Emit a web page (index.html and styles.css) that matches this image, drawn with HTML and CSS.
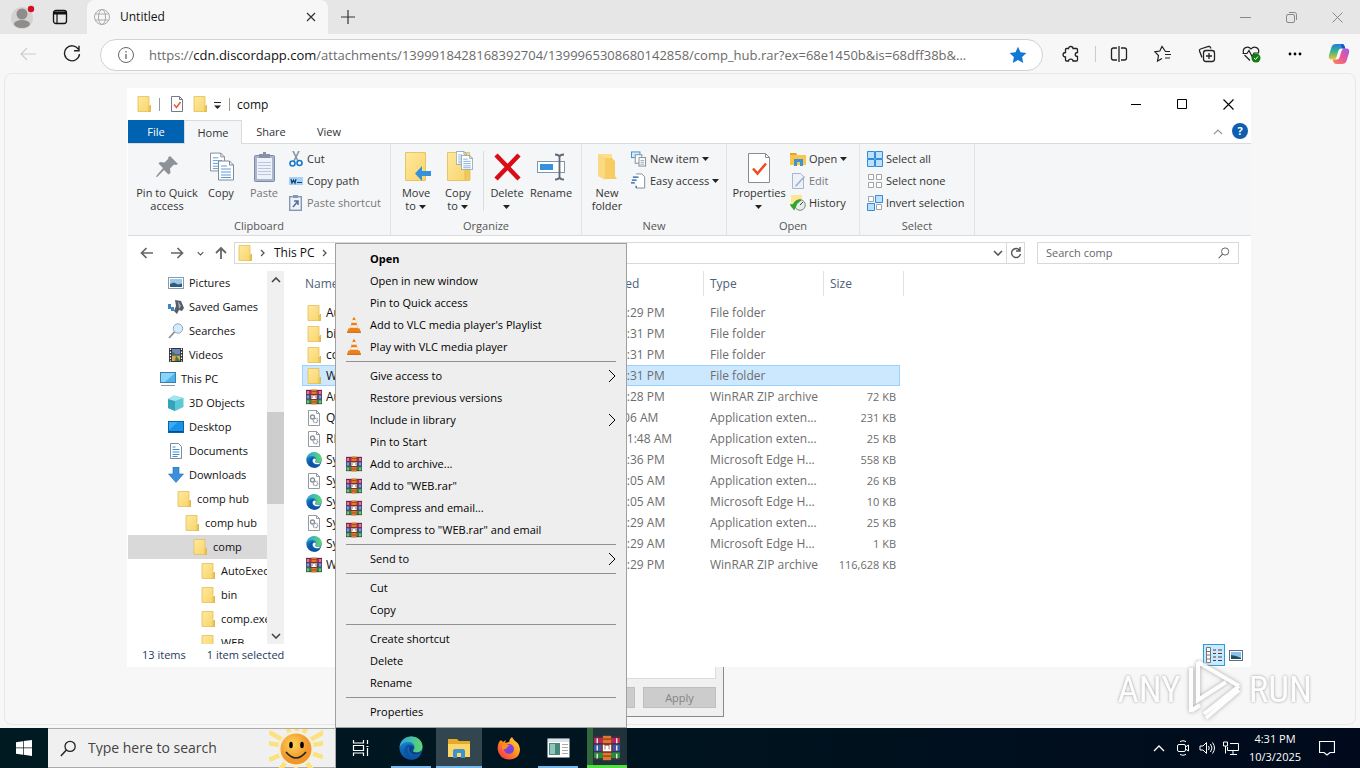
FILE: index.html
```html
<!DOCTYPE html>
<html lang="en">
<head>
<meta charset="utf-8">
<title>Untitled</title>
<link rel="stylesheet" href="styles.css">
</head>
<body>
<svg class="defs" aria-hidden="true">
  <defs>
    <linearGradient id="gFolder" x1="0" y1="0" x2="1" y2="1"><stop offset="0" stop-color="#ffe9a0"/><stop offset="1" stop-color="#f8d467"/></linearGradient>
    <linearGradient id="gEdge" x1="0" y1="0" x2="1" y2="0"><stop offset="0" stop-color="#2aa5dc"/><stop offset="1" stop-color="#5fd86a"/></linearGradient>
    <linearGradient id="gEdge2" x1="0" y1="0" x2="0" y2="1"><stop offset="0" stop-color="#1b8fd8"/><stop offset="1" stop-color="#0c4d9d"/></linearGradient>
    <linearGradient id="gCop1" x1="0" y1="0" x2="0" y2="1"><stop offset="0" stop-color="#1c7fe0"/><stop offset=".5" stop-color="#3fb58a"/><stop offset="1" stop-color="#f2c52b"/></linearGradient>
    <linearGradient id="gCop2" x1="1" y1="0" x2="0" y2="1"><stop offset="0" stop-color="#a35be8"/><stop offset=".5" stop-color="#e8569c"/><stop offset="1" stop-color="#fb8a4a"/></linearGradient>
    <linearGradient id="gFire" x1="1" y1="0" x2="0" y2="1"><stop offset="0" stop-color="#ffe23c"/><stop offset=".5" stop-color="#ff8a1e"/><stop offset="1" stop-color="#f0245c"/></linearGradient>
    <radialGradient id="gSun" cx=".4" cy=".35"><stop offset="0" stop-color="#ffd35a"/><stop offset="1" stop-color="#f0962a"/></radialGradient>
  </defs>
  <symbol id="folder" viewBox="0 0 16 16"><path d="M2 .5h11v11l1.500-2v6H2z" fill="url(#gFolder)" stroke="#e3bf55" stroke-width=".8"/><path d="M13 15.500V11.500l1.500-2.500v6.500z" fill="#f3cf5d" stroke="#d9b148" stroke-width=".7"/></symbol>
  <symbol id="rar" viewBox="0 0 16 16"><path d="M0 1h16v4.500H0z" fill="#b32a55"/><path d="M0 5.500h16v5H0z" fill="#3a56a8"/><path d="M0 10.500h16V15H0z" fill="#2a8b3c"/><path d="M0 1.300h16M0 5.500h16M0 10.300h16M0 14.700h16" stroke="#3a2540" stroke-width=".7"/><path d="M2 2v3M2 6.500v3M2 11.500v3M14 2v3M14 6.500v3M14 11.500v3" stroke="#f0e6da" stroke-width=".9"/><path d="M5.500.5h5v15h-5z" fill="#e0782e"/><path d="M5.500 2.500h5M5.500 13h5" stroke="#8d3f1c" stroke-width=".7"/><path d="M4.500 5h7v6h-7z" fill="#7b3326"/><path d="M6 6v3.500h1.500V7h1v2.500H10V6" fill="none" stroke="#fff" stroke-width="1.100"/></symbol>
  <symbol id="edge" viewBox="0 0 24 24"><circle cx="12" cy="12" r="11.500" fill="url(#gEdge2)"/><path d="M.6 11C1.500 4.500 6.500.5 12.500.5 19 .5 23.500 5 23.500 10.500c0 4-3 6-6 6-2.500 0-4-1-3.500-2 1-1 1.500-2 1.500-3.500C15.500 8 12.500 6 9 6S2.500 8 .6 11z" fill="url(#gEdge)"/><path d="M9 11.500c-1.500 5 2.500 9.500 7 9.500 2.500 0 4.500-1 6-2.500-2 3.500-6 5.300-9.500 5-4.500-.5-7.500-4-7.500-8 0-3 1.500-5.500 4-7 2.500-.5 5 .5 5.500 3 .2 1-.2 2-1 3-.5-2-2.500-4-4.500-3z" fill="#0b55a8"/><path d="M10 12c.5-2 2.500-3 4.300-1.800.9 1 .4 2.600-.3 3.800-.8 1.500 1.500 2.500 3.500 2.500 1.500 0 3.500-.5 5-2-.5 2-2.500 4-6 4-4 0-7-3-6.500-6.500z" fill="#0d3f7a" opacity=".9"/></symbol>
  <symbol id="edge-light" viewBox="0 0 24 24"><use href="#edge"/><path d="M10 12c.5-2 2.500-3 4.300-1.800.9 1 .4 2.600-.3 3.800-.8 1.500 1.500 2.500 3.500 2.500 1.500 0 3.500-.5 5-2-.5 2-2.500 4-6 4-4 0-7-3-6.500-6.500z" fill="#f2fafd"/></symbol>
  <symbol id="dll" viewBox="0 0 16 16"><path d="M2.500.5h8l3 3v12h-11z" fill="#fff" stroke="#8a8f96" stroke-width=".9"/><path d="M10.500.5v3h3" fill="none" stroke="#8a8f96" stroke-width=".9"/><circle cx="6.500" cy="7" r="2" fill="none" stroke="#85919c" stroke-width="1.300"/><circle cx="9.500" cy="10.500" r="2.200" fill="none" stroke="#85919c" stroke-width="1.300" stroke-dasharray="1 .5"/></symbol>
  <symbol id="vlc" viewBox="0 0 16 16"><path d="M1 15.500l1.300-4h11.400l1.300 4z" fill="#ee8418"/><path d="M7.200.5h1.600l3.700 12c-1.500 1.600-7.500 1.600-9 0z" fill="#ef7f14"/><path d="M6.500 3h3l.9 2.700H5.600zM4.800 8.200h6.400l.8 2.500H4z" fill="#f4f4f4"/><path d="M1 15.300h14" stroke="#b9600c" stroke-width=".9"/></symbol>
  <symbol id="props" viewBox="0 0 24 32"><path d="M1.500 2.500h17l4 4v25h-21z" fill="#fff" stroke="#8b8b8b"/><path d="M18.500 2.500v4h4" fill="none" stroke="#8b8b8b"/><path d="M6 17.500l4.500 5L19 12.500" fill="none" stroke="#e8501e" stroke-width="2.600"/></symbol>
  <symbol id="props-small" viewBox="0 0 14 16"><path d="M1.500.5h8l3 3v12h-11z" fill="#fff" stroke="#75798a"/><path d="M9.500.5v3h3" fill="none" stroke="#75798a"/><path d="M4 8.500l2.500 3 4-5.500" fill="none" stroke="#e0623a" stroke-width="1.600"/></symbol>
  <symbol id="page" viewBox="0 0 16 20"><path d="M.5.5h11l4 4v15H.5z" fill="#fff" stroke="#7d8a98"/><path d="M11.500.5v4h4" fill="none" stroke="#7d8a98"/><path d="M3 5.500h6M3 8.500h10M3 11.500h10M3 14.500h10M3 17h10" stroke="#5b9bd5"/></symbol>
  <symbol id="caret" viewBox="0 0 8 5"><path d="M0 0h7L3.500 4z" fill="#222"/></symbol>
  <symbol id="right" viewBox="0 0 8 14"><path d="M1 1l6 6-6 6" fill="none" stroke="currentColor"/></symbol>
  <symbol id="crumb" viewBox="0 0 5 8"><path d="M1 1l3 3-3 3" fill="none" stroke="currentColor" stroke-width="1.300"/></symbol>
  <symbol id="down" viewBox="0 0 10 6"><path d="M1 1l4 4 4-4" fill="none" stroke="currentColor" stroke-width="1.600"/></symbol>
  <symbol id="lens" viewBox="0 0 16 16"><circle cx="9.500" cy="6" r="4.800" fill="none" stroke="currentColor" stroke-width="1.200"/><path d="M6 9.500L.8 15" stroke="currentColor" stroke-width="1.400"/></symbol>
</svg>

<div class="screen">
  <header class="tabstrip">
    <button class="avatar" aria-label="Profile"><svg width="28" height="28" viewBox="0 0 28 28"><circle cx="14" cy="15" r="11" fill="#d4d3d1"/><circle cx="14" cy="11" r="5.500" fill="#8e8d8b"/><ellipse cx="14" cy="21" rx="8" ry="4" fill="#8e8d8b"/><circle cx="23" cy="6" r="3.200" fill="#d40f20"/></svg></button>
    <button class="spaces" aria-label="Tab actions"><svg width="16" height="16" viewBox="0 0 16 16"><rect x="1.500" y="1.500" width="13" height="13" rx="2.500" fill="none" stroke="#111" stroke-width="1.300"/><path d="M1.500 4h13" stroke="#111" stroke-width="3"/><path d="M5 4v10" stroke="#111" stroke-width="1.200"/></svg></button>
    <div class="tab">
      <svg width="18" height="18" viewBox="0 0 18 18" fill="none" stroke="#aaa"><circle cx="9" cy="9" r="7.500"/><ellipse cx="9" cy="9" rx="3.500" ry="7.500"/><path d="M2.500 6h13M2.500 12h13"/></svg>
      <span class="tab-title">Untitled</span>
      <button aria-label="Close tab"><svg width="10" height="10" viewBox="0 0 10 10"><path d="M1 1l8 8M9 1L1 9" stroke="#333" stroke-width="1.200"/></svg></button>
    </div>
    <button class="newtab" aria-label="New tab"><svg width="14" height="14" viewBox="0 0 14 14"><path d="M7 0v14M0 7h14" stroke="#333" stroke-width="1.200"/></svg></button>
    <div class="win-buttons faded">
      <button aria-label="Minimize"><svg width="11" height="11" viewBox="0 0 11 11"><path d="M0 5.500h11" stroke="currentColor"/></svg></button>
      <button aria-label="Restore"><svg width="11" height="11" viewBox="0 0 11 11" fill="none" stroke="currentColor"><rect x=".5" y="2.500" width="8" height="8" rx="1.500"/><path d="M3 .5h5.500a2 2 0 0 1 2 2V8"/></svg></button>
      <button aria-label="Close"><svg width="11" height="11" viewBox="0 0 11 11"><path d="M.5.5l10 10M10.500.5l-10 10" stroke="currentColor"/></svg></button>
    </div>
  </header>

  <div class="toolbar">
    <button class="tool back" aria-label="Back"><svg width="18" height="14" viewBox="0 0 18 14"><path d="M17 7H2M8 1L2 7l6 6" fill="none" stroke="#ccc" stroke-width="1.200"/></svg></button>
    <button class="tool" aria-label="Refresh"><svg width="18" height="18" viewBox="0 0 18 18"><path d="M15.500 4.500A7.500 7.500 0 1 0 16.500 9M16 .8v5h-5" fill="none" stroke="#222" stroke-width="1.400"/></svg></button>
    <div class="urlbar">
      <svg width="16" height="16" viewBox="0 0 16 16" fill="none" stroke="#666"><circle cx="8" cy="8" r="7.500"/><path d="M8 7v5M8 4v1.500" stroke-width="1.300"/></svg>
      <div class="url" role="textbox" aria-label="Address" contenteditable="true" spellcheck="false">https://<b>cdn.discordapp.com</b>/attachments/1399918428168392704/1399965308680142858/comp_hub.rar?ex=68e1450b&amp;is=68dff38b&amp;...</div>
      <button aria-label="Favorite"><svg width="18" height="18" viewBox="0 0 18 18"><path d="M9 .8l2.500 5.400 5.900.7-4.300 4.100 1.100 5.900L9 14l-5.200 2.900L4.900 11 .6 6.900l5.900-.7z" fill="#0f78d4"/></svg></button>
    </div>
    <button class="tool" aria-label="Extensions"><svg width="18" height="18" viewBox="0 0 18 18"><path d="M6.500 3.500C6.500.8 11 .8 11 3.500h3.500q1 0 1 1V7.500c-3 0-3 4 0 4V15q0 1-1 1H11c0-2.500-4.500-2.500-4.500 0H4.500q-1 0-1-1v-3c-3.300 0-3.300-4.500 0-4.500V4.500q0-1 1-1z" fill="none" stroke="#222" stroke-width="1.300"/></svg></button>
    <span class="tool-sep"></span>
    <button class="tool" aria-label="Split screen"><svg width="18" height="18" viewBox="0 0 18 18" fill="none" stroke="#222" stroke-width="1.300"><path d="M7 3H3.500Q1.500 3 1.500 5v8q0 2 2 2H7M11 3h3.500q2 0 2 2v8q0 2-2 2H11M9 1v16"/></svg></button>
    <button class="tool" aria-label="Favorites"><svg width="18" height="18" viewBox="0 0 18 18" fill="none" stroke="#222" stroke-width="1.200"><path d="M16 6.500h-4.500L8 1.500 5.800 6l-5 .8L4.500 10.500l-1 5.500L8 13.500M11 9.500h6M11 13h5"/></svg></button>
    <button class="tool" aria-label="Collections"><svg width="18" height="18" viewBox="0 0 18 18" fill="none" stroke="#222" stroke-width="1.300"><rect x="5.500" y="5.500" width="11" height="11" rx="2.500"/><path d="M11 8v6M8 11h6M4 12.500L1.500 6q-.5-1.500 1-2l8-2.500q1.300-.3 2 1l.5 1"/></svg></button>
    <button class="tool" aria-label="Browser essentials"><svg width="20" height="18" viewBox="0 0 20 18"><path d="M2.500 8C1 3 7 0 10 4c3-4 9-1 7.500 4M3.500 10L9 15.500M1.500 8.500H6l2-3 3 6 2-3.500h5" fill="none" stroke="#222" stroke-width="1.200"/><circle cx="15" cy="13" r="4.500" fill="#107c10"/><path d="M13 13l1.500 1.500 2.500-3" fill="none" stroke="#fff"/></svg></button>
    <button class="tool" aria-label="Settings and more"><svg width="16" height="4" viewBox="0 0 16 4"><circle cx="3" cy="2" r="1.400"/><circle cx="8" cy="2" r="1.400"/><circle cx="13" cy="2" r="1.400"/></svg></button>
    <button class="tool last" aria-label="Copilot"><svg width="22" height="22" viewBox="0 0 22 22"><path d="M8 1h6q2 0 2.500 2l.8 2.500H13q-2 0-2.700 2.500L8.500 14q-.8 2.500-3 2.500H3.500Q0 16.500 1 12L3.500 4Q4.500 1 8 1z" fill="url(#gCop1)"/><path d="M14 21H8q-2 0-2.500-2l-.8-2.500H9q2 0 2.700-2.500L13.500 8q.8-2.500 3-2.500h2q3.500 0 2.500 4.500L18.500 18q-1 3-4.500 3z" fill="url(#gCop2)"/><path d="M13 1h1q2 0 2.500 2l.8 2.500H14z" fill="#1a55c8"/></svg></button>
  </div>

  <main class="page"></main>

  <section class="dialog" aria-label="Dialog">
    <div class="dialog-panel"></div>
    <div class="dialog-buttons"><button disabled aria-label="Cancel"></button><button disabled>Apply</button></div>
  </section>

  <section class="explorer" aria-label="comp">
    <div class="titlebar">
      <svg width="16" height="16"><use href="#folder"/></svg><i class="vbar"></i>
      <svg class="small-props" width="14" height="16"><use href="#props-small"/></svg>
      <svg width="16" height="16"><use href="#folder"/></svg>
      <svg class="more-tools" width="9" height="8" viewBox="0 0 9 8"><path d="M1 .5h7" stroke="#222"/><path d="M1 3.500h7L4.500 7z" fill="#222"/></svg><i class="vbar"></i>
      <span class="title">comp</span>
      <div class="win-buttons">
        <button aria-label="Minimize"><svg width="11" height="11" viewBox="0 0 11 11"><path d="M0 5.500h10" stroke="#000"/></svg></button>
        <button aria-label="Maximize"><svg width="11" height="11" viewBox="0 0 11 11"><path d="M.5.5h9v9h-9z" fill="none" stroke="#000"/></svg></button>
        <button aria-label="Close"><svg width="11" height="11" viewBox="0 0 11 11"><path d="M.5.5l10 10M10.500.5l-10 10" stroke="#000" stroke-width="1.100"/></svg></button>
      </div>
    </div>
    <div class="tabs">
      <button class="file">File</button><button class="active">Home</button><button>Share</button><button>View</button>
      <span class="grow"></span>
      <button class="collapse" aria-label="Collapse ribbon"><svg width="10" height="6" viewBox="0 0 10 6"><path d="M1 5l4-4 4 4" fill="none" stroke="#999" stroke-width="1.200"/></svg></button>
      <button class="help" aria-label="Help">?</button>
    </div>
    <div class="ribbon">
      <div class="group clipboard">
        <div class="tools">
          <button class="big w70"><svg width="32" height="32" viewBox="0 0 32 32"><path d="M19 5l8 8-2 1-2-.5-4 4 .5 4.500-2 1.500-4.500-4.500L6 26l-1 0 1-2 6-7-4.500-4.500L9 11l4.500.5 4-4L17 6.500z" fill="#8d9299"/></svg>Pin to Quick<br>access</button>
          <button class="big w38"><svg width="32" height="32" viewBox="0 0 32 32"><use href="#page" x="5" y="1" width="15" height="20"/><use href="#page" x="13" y="9" width="16" height="21"/></svg>Copy</button>
          <button class="big w48 off"><svg width="32" height="32" viewBox="0 0 32 32"><rect x="6.500" y="4.500" width="20" height="26" rx="1" fill="#a9b6cf" stroke="#7f8ba5"/><rect x="9" y="7" width="15" height="21" fill="#eef2fa"/><path d="M10 11.500h13M10 14.500h13M10 17.500h13M10 20.500h13M10 23.500h13" stroke="#b9c6dc"/><path d="M11 3h4V1h3v2h4v4H11z" fill="#8792a8"/></svg>Paste</button>
          <div class="stack">
            <button><svg width="14" height="16" viewBox="0 0 14 16"><path d="M4 0l5 10M10 0L5 10" stroke="#8793a1" stroke-width="1.600"/><circle cx="3.500" cy="12.500" r="2.500" fill="none" stroke="#1979ca" stroke-width="1.600"/><circle cx="10.500" cy="12" r="2.500" fill="none" stroke="#1979ca" stroke-width="1.600"/></svg>Cut</button>
            <button><svg width="14" height="16" viewBox="0 0 14 16"><rect y="4" width="14" height="8" fill="#a6d2f5"/><path d="M2 6l1 4 1.500-3L6 10l1-4M8 9.500h5" fill="none" stroke="#17406d" stroke-width="1.200"/></svg>Copy path</button>
            <button class="off"><svg width="14" height="16" viewBox="0 0 14 16"><rect x=".7" y="1.700" width="11.600" height="13.600" fill="#eef2fa" stroke="#8796b4" stroke-width="1.400"/><path d="M4 0h5v3H4z" fill="#8796b4"/><path d="M4 12l5-6M5 6h4v4" fill="none" stroke="#536d9c" stroke-width="1.500"/></svg>Paste shortcut</button>
          </div>
        </div>
        <div class="label">Clipboard</div>
      </div>
      <div class="group organize">
        <div class="tools">
          <button class="big w42"><svg width="32" height="32" viewBox="0 0 32 32"><path d="M5.500 1.500h20v28h-20z" fill="url(#gFolder)" stroke="#e6c467"/><path d="M22 25h9v-5h-9v-5l-7 7.500 7 7.500z" fill="#3391dd"/></svg><span>Move<br>to <svg width="8" height="5"><use href="#caret"/></svg></span></button>
          <button class="big w42"><svg width="32" height="32" viewBox="0 0 32 32"><path d="M5.500 1.500h22v28h-22z" fill="url(#gFolder)" stroke="#e6c467"/><path d="M23 29v-12h5v12" fill="#f0ca59" stroke="#d7b048" stroke-width=".6"/><use href="#page" x="14" y="0" width="11" height="14"/><use href="#page" x="19" y="4" width="12" height="15"/></svg><span>Copy<br>to <svg width="8" height="5"><use href="#caret"/></svg></span></button>
          <i class="short-sep"></i>
          <button class="big w44"><svg width="32" height="32" viewBox="0 0 32 32"><path d="M5 4l23 24M28 4L5 28" stroke="#dc0b18" stroke-width="4.500"/></svg><span>Delete<br><svg width="8" height="5"><use href="#caret"/></svg></span></button>
          <button class="big w44"><svg width="32" height="32" viewBox="0 0 32 32"><rect x="2.500" y="10.500" width="27" height="11" fill="#fff" stroke="#8294a7"/><rect x="5" y="13" width="13" height="6" fill="#3391dd"/><path d="M20 3.500q4 0 4.500 2.500Q25 3.500 29 3.500M24.500 6v20M20 28.500q4 0 4.500-2.500 .5 2.500 4.500 2.500" fill="none" stroke="#5f6b78" stroke-width="1.800"/></svg>Rename</button>
        </div>
        <div class="label">Organize</div>
      </div>
      <div class="group new">
        <div class="tools">
          <button class="big w42"><svg width="32" height="32" viewBox="0 0 32 32"><path d="M7 3h14v22H7z" fill="#ffe08a"/><path d="M13 7h8l3 3v15l2 3H14z" fill="#f6cc63"/><path d="M7 3l7 4v22l-7-4z" fill="#fbd983"/></svg>New<br>folder</button>
          <div class="stack">
            <button><svg width="16" height="16" viewBox="0 0 17 16"><rect x=".5" y=".5" width="9" height="6" fill="#d9ecfb" stroke="#3d8fd1"/><rect x="4.500" y="3.500" width="7" height="9" fill="#fff" stroke="#7d8a98"/><rect x="8.500" y="6.500" width="7" height="9" fill="#fff" stroke="#7d8a98"/><path d="M10 9.500h4M10 11.500h4M10 13.500h4" stroke="#9aa"/></svg>New item <svg width="8" height="5"><use href="#caret"/></svg></button>
            <button><svg width="16" height="16" viewBox="0 0 17 16"><path d="M5.500.5h6l3 3v12h-9" fill="#fff" stroke="#7d8a98"/><path d="M5.500 13v2.500M2 4h6M1 7h5M0 10h4" stroke="#1d5fa8" stroke-width="1.300"/></svg>Easy access <svg width="8" height="5"><use href="#caret"/></svg></button>
          </div>
        </div>
        <div class="label">New</div>
      </div>
      <div class="group open">
        <div class="tools">
          <button class="big w56"><svg width="24" height="32"><use href="#props"/></svg><span>Properties<br><svg width="8" height="5"><use href="#caret"/></svg></span></button>
          <div class="stack">
            <button><svg width="16" height="16" viewBox="0 0 16 16"><path d="M0 2h6l1 2h9v10H0z" fill="#f7c64a"/><path d="M0 2h6l1 2H0z" fill="#e0a52c"/><path d="M4 15V8h9v7h-3v-4H7v4z" fill="#3b94d9"/></svg>Open <svg width="8" height="5"><use href="#caret"/></svg></button>
            <button class="off"><svg width="16" height="16" viewBox="0 0 16 16"><path d="M2.500.5h8l3 3v12h-11z" fill="#edf2fa" stroke="#a7b6cd"/><path d="M15 4l-8 9-2 1 1-2.500 8-8.500z" fill="#9fb0ca"/></svg>Edit</button>
            <button><svg width="16" height="16" viewBox="0 0 16 16"><path d="M1 0h11v13H1z" fill="#ffe58f"/><circle cx="10" cy="10" r="5.300" fill="#e6ece6" stroke="#7b8a80"/><path d="M3.500 12A6 6 0 0 1 11 5.500M1 10l3 4 2-4z" fill="#2ea336" stroke="#2ea336" stroke-width="1.500"/><path d="M10 10l3-3" stroke="#444"/></svg>History</button>
          </div>
        </div>
        <div class="label">Open</div>
      </div>
      <div class="group select">
        <div class="tools">
          <div class="stack">
            <button><svg width="16" height="16" viewBox="0 0 16 16"><path d="M.5.500h7v7h-7zM8.500.500h7v7h-7zM.5 8.500h7v7h-7zM8.500 8.500h7v7h-7z" fill="#bfe0fb" stroke="#2f8ddb"/></svg>Select all</button>
            <button><svg width="16" height="16" viewBox="0 0 16 16"><path d="M1.500 1.500h5v5h-5zM9.500 1.500h5v5h-5zM1.500 9.500h5v5h-5zM9.500 9.500h5v5h-5z" fill="#fff" stroke="#a3a3a3"/></svg>Select none</button>
            <button><svg width="16" height="16" viewBox="0 0 16 16"><path d="M1.500 1.500h5v5h-5zM9.500 9.500h5v5h-5z" fill="#fff" stroke="#a3a3a3"/><path d="M8.500.500h7v7h-7zM.5 8.500h7v7h-7z" fill="#bfe0fb" stroke="#2f8ddb"/></svg>Invert selection</button>
          </div>
        </div>
        <div class="label">Select</div>
      </div>
    </div>

    <div class="navrow">
      <button class="n30" aria-label="Back"><svg width="14" height="12" viewBox="0 0 14 12"><path d="M13 6H2M6.500 1L1.500 6l5 5" fill="none" stroke="#666" stroke-width="1.700"/></svg></button>
      <button class="n30" aria-label="Forward"><svg width="14" height="12" viewBox="0 0 14 12"><path d="M1 6h11M7.500 1l5 5-5 5" fill="none" stroke="#666" stroke-width="1.700"/></svg></button>
      <button class="n16" aria-label="Recent"><svg width="7" height="5"><use href="#down"/></svg></button>
      <button class="n26" aria-label="Up"><svg width="12" height="14" viewBox="0 0 12 14"><path d="M6 13V2M1 7l5-5 5 5" fill="none" stroke="#666" stroke-width="1.800"/></svg></button>
      <div class="address">
        <svg width="16" height="16"><use href="#folder"/></svg>
        <svg class="crumb" width="5" height="8"><use href="#crumb"/></svg>
        <a href="#pc">This PC</a>
        <svg class="crumb" width="5" height="8"><use href="#crumb"/></svg>
        <span class="grow"></span>
        <button class="n16" aria-label="History"><svg width="10" height="6"><use href="#down"/></svg></button>
        <button class="reload" aria-label="Refresh"><svg width="12" height="12" viewBox="0 0 12 12"><path d="M9.500 3A4.500 4.500 0 1 0 10.500 7M10 0v4H6" fill="none" stroke="#555" stroke-width="1.400"/></svg></button>
      </div>
      <label class="find"><input type="text" aria-label="Search comp" placeholder="Search comp"><svg width="12" height="12"><use href="#lens"/></svg></label>
    </div>

    <div class="body">
      <nav class="tree">
        <a href="#t" class="l1"><svg width="16" height="16" viewBox="0 0 16 16"><rect x=".5" y="2.500" width="15" height="11" fill="#fff" stroke="#8a9aa8"/><path d="M2 4h12v8H2z" fill="#9cc8ea"/><path d="M2 9l4-1.500 4 2 4-1V12H2z" fill="#2f5b80"/></svg>Pictures</a>
        <a href="#t" class="l1"><svg width="16" height="16" viewBox="0 0 16 16"><path d="M7 1l6 1 3 7-2 3-3-1-2 4-3-3 2-5z" fill="#555d66"/><path d="M10 2l3 5-2 3z" fill="#a9b2ba"/><path d="M0 5h3v3h3v4H3v-2H0z" fill="#3f86c4"/></svg>Saved Games</a>
        <a href="#t" class="l1"><svg width="16" height="16" viewBox="0 0 16 16"><circle cx="10" cy="5.500" r="4.700" fill="#d3ecfb" stroke="#8aa9bf"/><path d="M6.500 9L1 15" stroke="#8a8f96" stroke-width="1.800"/></svg>Searches</a>
        <a href="#t" class="l1"><svg width="16" height="16" viewBox="0 0 16 16"><path d="M1 1h14v14H1z" fill="#30343a"/><path d="M4 2h8v5.500H4z" fill="#6a88c0"/><path d="M4 8.500h8V14H4z" fill="#d8a84a"/><path d="M4 4l4 3.500H4zM8 8.500l4 5.500H7z" fill="#3a7a58"/><path d="M2.500 1.500v13M13.500 1.500v13" stroke="#fff" stroke-width="1.200" stroke-dasharray="1.500 1.500"/></svg>Videos</a>
        <a href="#t" class="l0"><svg width="16" height="16" viewBox="0 0 16 16"><rect x=".5" y="1.500" width="15" height="10" fill="#4db4ee" stroke="#3a7fae"/><path d="M1 2h14L5 11H1z" fill="#8ad4f8"/><path d="M1 14.500h14" stroke="#8796a3"/></svg>This PC</a>
        <a href="#t" class="l1"><svg width="16" height="16" viewBox="0 0 16 16"><path d="M0 4l6-3.500L15.500 3v9L7 16 0 13z" fill="#5cc7d8"/><path d="M0 4l7 2v10l-7-3z" fill="#35a3ba"/><path d="M0 4l6-3.500L15.500 3 7 6z" fill="#a5e4ec"/></svg>3D Objects</a>
        <a href="#t" class="l1"><svg width="16" height="16" viewBox="0 0 16 16"><rect x=".5" y="2.500" width="15" height="11" fill="#1694ea" stroke="#0b62a8"/><path d="M1 12.500h14" stroke="#0a4d87"/><path d="M1 3h9L1 11z" fill="#38adf6"/></svg>Desktop</a>
        <a href="#t" class="l1"><svg width="16" height="16" viewBox="0 0 16 16"><path d="M2.500.5h8l3 3v12h-11z" fill="#fff" stroke="#7d8a98"/><path d="M4.500 4h3M4.500 6.500h7M4.500 9h7M4.500 11.500h7M4.500 13.500h5" stroke="#3d8fd1"/></svg>Documents</a>
        <a href="#t" class="l1"><svg width="16" height="16" viewBox="0 0 16 16"><path d="M5 0h6v7h4.500L8 15.500.5 7H5z" fill="#3b8fdb" stroke="#2370b5" stroke-width=".6"/></svg>Downloads</a>
        <a href="#t" class="l2"><svg width="16" height="16"><use href="#folder"/></svg>comp hub</a>
        <a href="#t" class="l3"><svg width="16" height="16"><use href="#folder"/></svg>comp hub</a>
        <a href="#t" class="l4 current"><svg width="16" height="16"><use href="#folder"/></svg>comp</a>
        <a href="#t" class="l5"><svg width="16" height="16"><use href="#folder"/></svg>AutoExec</a>
        <a href="#t" class="l5"><svg width="16" height="16"><use href="#folder"/></svg>bin</a>
        <a href="#t" class="l5"><svg width="16" height="16"><use href="#folder"/></svg>comp.exe</a>
        <a href="#t" class="l5"><svg width="16" height="16"><use href="#folder"/></svg>WEB</a>
      </nav>
      <div class="scroll">
        <button aria-label="Scroll up"><svg class="flip" width="10" height="6"><use href="#down"/></svg></button>
        <div class="track"><div class="thumb"></div></div>
        <button aria-label="Scroll down"><svg width="10" height="6"><use href="#down"/></svg></button>
      </div>
      <table class="files">
        <colgroup><col class="c-name"><col class="c-date"><col class="c-type"><col class="c-size"></colgroup>
        <thead><tr><th>Name</th><th>Date modified</th><th>Type</th><th>Size</th></tr></thead>
        <tbody>
          <tr><td><svg width="16" height="16"><use href="#folder"/></svg>AutoExec</td><td>10/3/2025 4:29 PM</td><td>File folder</td><td></td></tr>
          <tr><td><svg width="16" height="16"><use href="#folder"/></svg>bin</td><td>10/3/2025 4:31 PM</td><td>File folder</td><td></td></tr>
          <tr><td><svg width="16" height="16"><use href="#folder"/></svg>comp.exe</td><td>10/3/2025 4:31 PM</td><td>File folder</td><td></td></tr>
          <tr class="selected"><td><svg width="16" height="16"><use href="#folder"/></svg>WEB</td><td>10/3/2025 4:31 PM</td><td>File folder</td><td></td></tr>
          <tr><td><svg width="16" height="16"><use href="#rar"/></svg>AutoExec</td><td>10/3/2025 4:28 PM</td><td>WinRAR ZIP archive</td><td>72 KB</td></tr>
          <tr><td><svg width="16" height="16"><use href="#dll"/></svg>Qt.dll</td><td>8/3/2025 5:06 AM</td><td>Application exten...</td><td>231 KB</td></tr>
          <tr><td><svg width="16" height="16"><use href="#dll"/></svg>RI.dll</td><td>7/30/2025 11:48 AM</td><td>Application exten...</td><td>25 KB</td></tr>
          <tr><td><svg width="16" height="16"><use href="#edge-light"/></svg>System</td><td>10/3/2025 4:36 PM</td><td>Microsoft Edge H...</td><td>558 KB</td></tr>
          <tr><td><svg width="16" height="16"><use href="#dll"/></svg>System</td><td>10/3/2025 5:05 AM</td><td>Application exten...</td><td>26 KB</td></tr>
          <tr><td><svg width="16" height="16"><use href="#edge-light"/></svg>System</td><td>10/3/2025 5:05 AM</td><td>Microsoft Edge H...</td><td>10 KB</td></tr>
          <tr><td><svg width="16" height="16"><use href="#dll"/></svg>System</td><td>10/3/2025 4:29 AM</td><td>Application exten...</td><td>25 KB</td></tr>
          <tr><td><svg width="16" height="16"><use href="#edge-light"/></svg>System</td><td>10/3/2025 4:29 AM</td><td>Microsoft Edge H...</td><td>1 KB</td></tr>
          <tr><td><svg width="16" height="16"><use href="#rar"/></svg>WEB</td><td>10/3/2025 4:29 PM</td><td>WinRAR ZIP archive</td><td>116,628 KB</td></tr>
        </tbody>
      </table>
    </div>
    <div class="status">
      <span>13 items</span><span>1 item selected</span>
      <div class="views">
        <button class="on" aria-label="Details"><svg width="16" height="16" viewBox="0 0 16 16"><path d="M.5.5h4v15h-4zM.5 4.500h4M.5 8h4M.5 12h4" fill="#fff" stroke="#777"/><path d="M7 3h3M12 3h4M7 6.500h3M12 6.500h4M7 10h3M12 10h4M7 13.500h3M12 13.500h4" stroke="#444"/></svg></button>
        <button aria-label="Large icons"><svg width="14" height="11" viewBox="0 0 14 11"><rect x=".5" y=".5" width="13" height="10" fill="#fff" stroke="#5f6f8a"/><path d="M2 2h10v7H2z" fill="#8bc2ec"/><path d="M2 5l5 1 5 2v1H2z" fill="#1e4f5c"/></svg></button>
      </div>
    </div>
  </section>

  <ul class="menu" role="menu">
    <li><button role="menuitem"><i></i><strong>Open</strong></button></li>
    <li><button role="menuitem"><i></i>Open in new window</button></li>
    <li><button role="menuitem"><i></i>Pin to Quick access</button></li>
    <li><button role="menuitem"><i><svg width="16" height="16"><use href="#vlc"/></svg></i>Add to VLC media player's Playlist</button></li>
    <li><button role="menuitem"><i><svg width="16" height="16"><use href="#vlc"/></svg></i>Play with VLC media player</button></li>
    <li class="rule" role="separator"></li>
    <li><button role="menuitem"><i></i>Give access to<svg class="more" width="8" height="14"><use href="#right"/></svg></button></li>
    <li><button role="menuitem"><i></i>Restore previous versions</button></li>
    <li><button role="menuitem"><i></i>Include in library<svg class="more" width="8" height="14"><use href="#right"/></svg></button></li>
    <li><button role="menuitem"><i></i>Pin to Start</button></li>
    <li><button role="menuitem"><i><svg width="16" height="16"><use href="#rar"/></svg></i>Add to archive...</button></li>
    <li><button role="menuitem"><i><svg width="16" height="16"><use href="#rar"/></svg></i>Add to "WEB.rar"</button></li>
    <li><button role="menuitem"><i><svg width="16" height="16"><use href="#rar"/></svg></i>Compress and email...</button></li>
    <li><button role="menuitem"><i><svg width="16" height="16"><use href="#rar"/></svg></i>Compress to "WEB.rar" and email</button></li>
    <li class="rule" role="separator"></li>
    <li><button role="menuitem"><i></i>Send to<svg class="more" width="8" height="14"><use href="#right"/></svg></button></li>
    <li class="rule" role="separator"></li>
    <li><button role="menuitem"><i></i>Cut</button></li>
    <li><button role="menuitem"><i></i>Copy</button></li>
    <li class="rule" role="separator"></li>
    <li><button role="menuitem"><i></i>Create shortcut</button></li>
    <li><button role="menuitem"><i></i>Delete</button></li>
    <li><button role="menuitem"><i></i>Rename</button></li>
    <li class="rule" role="separator"></li>
    <li><button role="menuitem"><i></i>Properties</button></li>
  </ul>

  <div class="watermark"><span>ANY</span><svg width="58" height="64" viewBox="0 0 58 64" fill="none" stroke="#fff" stroke-width="4"><path d="M5 10v44M5 53l9-6M12 4l41 24M12 4v38l28-18M53 28L18 56M20 60l33-28"/></svg><span>RUN</span></div>

  <footer class="taskbar">
    <button class="start" aria-label="Start"><svg width="16" height="16" viewBox="0 0 16 16"><path d="M0 2.200L7 1.200v6.300H0zM7.700 1.100L16 0v7.500H7.700zM0 8.300h7v6.400l-7-1zM7.700 8.300H16V16l-8.300-1.200z" fill="#fff"/></svg></button>
    <label class="search"><svg width="17" height="17"><use href="#lens"/></svg><input type="text" aria-label="Search" placeholder="Type here to search">
      <svg class="sun" width="54" height="39" viewBox="0 0 54 39"><path d="M27 19L18-3M27 19L38-3M27 19L55 3M27 19L55 14M27 19L54 28M27 19L44 42M27 19L27 42M27 19L10 42M27 19L0 31M27 19L-1 14M27 19L0 3M27 19L28-4" stroke="#fbe27c" stroke-width="4.500"/><circle cx="27" cy="20" r="18" fill="#f3efdc"/><circle cx="27" cy="20" r="15.500" fill="url(#gSun)"/><ellipse cx="22" cy="16" rx="1.800" ry="3.200"/><ellipse cx="33" cy="16" rx="1.800" ry="3.200"/><path d="M17 23q10 12 20 0" fill="none" stroke="#222" stroke-width="1.600"/></svg>
    </label>
    <button class="app view" aria-label="Task view"><svg width="18" height="16" viewBox="0 0 18 16" fill="none" stroke="#fff" stroke-width="1.200"><path d="M1.500 0v3h10V0M1.500 5.500h10v5h-10zM1.500 16v-3h10v3M15.500 0v4M15.500 8v8M14.500 6.500h2"/></svg></button>
    <button class="app running" aria-label="Edge"><svg width="24" height="24"><use href="#edge"/></svg></button>
    <button class="app running active" aria-label="File Explorer"><svg width="24" height="20" viewBox="0 0 24 20"><path d="M1 1h9l2 2h11v16H1z" fill="#e7a92c"/><path d="M1 6h22v13H1z" fill="#fdd766"/><path d="M6 20v-7q0-2 2-2h8q2 0 2 2v7h-4v-5h-4v5z" fill="#3f92d2"/></svg></button>
    <button class="app" aria-label="Firefox"><svg width="24" height="24" viewBox="0 0 24 24"><path d="M2 6l2-2 2 2 3-2-1 3 4-1q0-3 3-5 1 2 3 4 4 2 5 8 0 10-11 10.500Q2 23 .5 13 .5 9 2 6z" fill="url(#gFire)"/><circle cx="12" cy="13" r="5" fill="#7b42e0"/><path d="M5 8q4-1 8 2-3 0-3 2-2 2-5 1z" fill="#ff8a1e"/></svg></button>
    <button class="app running" aria-label="Application"><svg width="23" height="20" viewBox="0 0 23 20"><path d="M.5.500h22v19H.5z" fill="#fff"/><path d="M1 1h21v3H1z" fill="#d9e4ea"/><path d="M2 5h11v12H2z" fill="#47877c"/><path d="M3 6h5v10H3z" fill="#8ec6b8"/><path d="M15 6.500h6M15 9.500h6M15 12.500h6M15 15.500h6" stroke="#aaa"/></svg></button>
    <button class="app busy" aria-label="WinRAR"><svg width="26" height="26"><use href="#rar"/></svg></button>
    <span class="grow"></span>
    <div class="tray">
      <button aria-label="Hidden icons"><svg width="12" height="8" viewBox="0 0 12 8"><path d="M1 7l5-5 5 5" fill="none" stroke="#fff" stroke-width="1.300"/></svg></button>
      <button aria-label="Meet now"><svg width="14" height="16" viewBox="0 0 14 16" fill="none" stroke="#fff"><rect x="1.500" y="4.500" width="8" height="7" rx="1.500"/><path d="M9.500 7l3-2v6l-3-2M4 1.500q3-1.500 6 0M4 14.500q3 1.500 6 0"/></svg></button>
      <button aria-label="Volume"><svg width="17" height="14" viewBox="0 0 17 14" fill="none" stroke="#fff"><path d="M1 5h3l3.500-3.500v11L4 9H1zM9.500 5q1.500 2 0 4M11.500 3q3 4 0 8M13.500 1.500q4 5.500 0 11"/></svg></button>
      <button aria-label="Network"><svg width="16" height="14" viewBox="0 0 16 14" fill="none" stroke="#fff"><path d="M7 2.500h8.500v7H4.500V6M7 13.500h7M10 9.500v4M.5 1v4h4V1zM2.500 5v7.500"/></svg></button>
    </div>
    <div class="clock"><span>4:31 PM</span><span>10/3/2025</span></div>
    <button class="notify" aria-label="Notifications"><svg width="16" height="16" viewBox="0 0 16 16"><path d="M.5 1.500h15v11H11L8 15l-3-2.500H.5z" fill="none" stroke="#fff" stroke-width="1.200"/></svg></button>
  </footer>
</div>
</body>
</html>
```
FILE: styles.css
```css
* { box-sizing: border-box; }
html, body { height: 100%; }
body { margin: 0; font: 12px/16px "Open Sans", "Noto Sans", sans-serif; color: #111; overflow: hidden; }
button, input { font: inherit; color: inherit; border: 0; padding: 0; margin: 0; background: none; outline: 0; }
button { display: flex; align-items: center; justify-content: center; }
a { color: inherit; text-decoration: none; }
svg { display: block; flex: none; }
.defs { position: absolute; width: 0; height: 0; }
.grow { flex: 1; }

.screen { position: relative; display: flex; flex-direction: column; height: 100vh; background: #f7f7f7; }

/* Browser */
.tabstrip { display: flex; align-items: stretch; height: 34px; background: #e6e6e6; }
.avatar { width: 43px; }
.spaces { width: 34px; }
.tab { display: flex; align-items: center; gap: 9px; width: 241px; margin-left: 10px; padding: 0 12px 0 6px; background: #f7f7f7; border-radius: 8px 8px 0 0; }
.tab-title { flex: 1; }
.newtab { width: 40px; }
.win-buttons { display: flex; margin-left: auto; }
.win-buttons button { width: 46px; }
.faded { color: #888; }
.toolbar { display: flex; align-items: center; height: 39px; }
.tool { width: 44px; height: 32px; }
.tool.back { margin-left: 6px; }
.tool.last { width: 43px; }
.urlbar { display: flex; flex: 1; align-items: center; gap: 15px; min-width: 0; height: 32px; margin: 2px 6px 0; padding: 0 15px 0 17px; background: #fff; border: 1px solid #d2d2d2; border-radius: 16px; }
.url { flex: 1; overflow: hidden; white-space: nowrap; font-size: 13px; line-height: 20px; color: #6b6b6b; outline: 0; }
.url b { font-weight: 400; color: #111; }
.tool-sep { width: 1px; height: 16px; margin: 0 1px 0 2px; background: #ccc; }
.page { flex: 1; margin: 0 4px 3px; border: 1px solid #e8e8e8; border-radius: 8px; background: #f7f7f7; }

/* Dialog behind the explorer window */
.dialog { position: absolute; left: 400px; top: 500px; width: 324px; height: 217px; display: flex; flex-direction: column; padding: 0 7px 8px; background: #f0f0f0; border: 1px solid #8a8a8a; font-size: 11px; }
.dialog-panel { flex: 1; background: #fff; border: 1px solid #dcdcdc; }
.dialog-buttons { display: flex; justify-content: flex-end; gap: 8px; padding-top: 8px; }
.dialog-buttons button { width: 73px; height: 21px; background: #ccc; border: 1px solid #bfbfbf; color: #838383; }

/* Explorer window */
.explorer { position: absolute; left: 127px; right: 109px; top: 88px; display: flex; flex-direction: column; padding-left: 1px; background: #fff; font-size: 11px; }
.titlebar { display: flex; align-items: stretch; height: 32px; padding-left: 8px; }
.titlebar > svg, .titlebar > i, .title { align-self: center; }
.vbar { width: 1px; height: 13px; margin: 0 8px 0 7px; background: #999; }
.titlebar .small-props { margin: 0 8px 0 2px; }
.titlebar .more-tools { margin: 3px 0 0 5px; }
.title { margin-left: -1px; padding-top: 1px; font-size: 12px; }
.tabs { display: flex; height: 24px; border-bottom: 1px solid #dadbdc; }
.tabs button { width: 58px; margin-bottom: -1px; color: #333; }
.tabs .file { width: 56px; margin-bottom: 0; background: #0063b1; color: #fff; }
.tabs .active { background: #f5f6f7; border: 1px solid #dadbdc; border-bottom: 0; }
.tabs .collapse { width: 26px; }
.tabs .help { width: 16px; height: 16px; margin: 3px 3px 0 1px; border-radius: 50%; background: #0f5fae; color: #fff; font-weight: 700; }
.ribbon { display: flex; height: 92px; background: #f5f6f7; border-bottom: 1px solid #dadbdc; color: #333; }
.group { display: flex; flex-direction: column; border-right: 1px solid #e2e3e4; padding: 4px 4px 0; }
.clipboard { width: 263px; }
.organize { width: 191px; }
.new { width: 145px; }
.open { width: 133px; }
.select { width: 115px; }
.tools { display: flex; flex: 1; }
.label { height: 18px; line-height: 17px; text-align: center; color: #555; }
.big { flex: none; flex-direction: column; justify-content: flex-start; gap: 3px; padding-top: 3px; line-height: 13px; text-align: center; }
.big span svg { display: inline-block; vertical-align: middle; }
.w38 { width: 38px; } .w42 { width: 42px; } .w44 { width: 44px; } .w48 { width: 48px; } .w56 { width: 56px; } .w70 { width: 70px; }
.off { color: #777; }
.short-sep { width: 1px; height: 60px; margin: 3px 1px 0 4px; background: #dcdddf; }
.stack { padding-left: 3px; }
.stack button { height: 22px; gap: 3px; justify-content: flex-start; white-space: nowrap; }
.clipboard .stack { padding-left: 1px; }
.clipboard .stack button { gap: 4px; }

.navrow { display: flex; align-items: center; height: 35px; padding: 0 12px 1px 4px; color: #555; font-size: 12px; }
.n30 { width: 30px; } .n16 { width: 16px; } .n26 { width: 26px; }
.address { display: flex; flex: 1; align-items: center; height: 22px; padding-left: 2px; border: 1px solid #d9d9d9; }
.address a { color: #111; }
.crumb { margin: 0 9px 0 7px; }
.reload { width: 18px; height: 20px; border-left: 1px solid #d9d9d9; }
.find { display: flex; align-items: center; width: 202px; height: 22px; margin-left: 12px; padding: 0 8px; border: 1px solid #d9d9d9; }
.find input { flex: 1; min-width: 0; font-size: 11px; }
.find input::placeholder { color: #666; opacity: 1; }

.body { display: flex; height: 373px; }
.tree { width: 139px; overflow: hidden; }
.tree a { display: flex; align-items: center; gap: 5px; height: 24px; white-space: nowrap; }
.tree .l0 { padding-left: 32px; }
.tree .l1 { padding-left: 40px; }
.tree .l2 { padding-left: 48px; }
.tree .l3 { padding-left: 56px; }
.tree .l4 { padding-left: 64px; }
.tree .l5 { padding-left: 72px; }
.tree .current { background: #d9d9d9; }
.scroll { display: flex; flex-direction: column; width: 17px; background: #f0f0f0; color: #444; }
.scroll button { height: 17px; }
.flip { transform: rotate(180deg); }
.track { flex: 1; padding-top: 124px; }
.thumb { height: 92px; background: #cdcdcd; }
.files { width: 602px; margin-left: 18px; align-self: flex-start; border-collapse: separate; border-spacing: 0; table-layout: fixed; font-size: 12px; }
.c-name { width: 252px; } .c-date { width: 150px; } .c-type { width: 120px; } .c-size { width: 80px; }
.files th { height: 31px; padding: 0 6px 5px; text-align: left; font-weight: 400; color: #4c607a; background: linear-gradient(#e2e2e2, #e2e2e2) right top / 1px 25px no-repeat; }
.files th:first-child { padding-left: 3px; }
.files td { height: 21px; padding: 0 4px 0 6px; white-space: nowrap; line-height: 16px; color: #6d6d6d; }
.files td:first-child { padding-left: 4px; color: #111; }
.files td:last-child { padding-right: 4px; border-right: 4px solid #fff; text-align: right; font-size: 11px; }
.files td svg { display: inline-block; vertical-align: top; margin-right: 4px; }
.selected td { background: #cce8ff; box-shadow: inset 0 1px #99d1ff, inset 0 -1px #99d1ff; }
.selected td:first-child { box-shadow: inset 1px 1px #99d1ff, inset 0 -1px #99d1ff; }
.selected td:last-child { box-shadow: inset -1px 1px #99d1ff, inset 0 -1px #99d1ff; }
.status { display: flex; align-items: flex-start; gap: 21px; height: 23px; padding: 0 4px 0 14px; color: #1e395b; line-height: 22px; }
.views { display: flex; margin-left: auto; }
.views button { width: 22px; height: 22px; }
.views .on { background: #cce8ff; border: 1px solid #26a0da; }

/* Context menu */
.menu { position: absolute; left: 335px; bottom: 40px; width: 292px; margin: 0; padding: 4px 2px; list-style: none; background: #eee; border: 1px solid #a0a0a0; color: #000; font-size: 11px; }
.menu button { width: 100%; height: 22px; justify-content: flex-start; }
.menu i { width: 32px; padding-left: 8px; }
.menu .more { margin: 0 8px 0 auto; }
.rule { height: 7px; padding: 3px 8px; }
.rule::before { content: ""; display: block; height: 1px; background: #919191; }

.watermark { position: absolute; right: 48px; bottom: 46px; display: flex; align-items: center; gap: 5px; color: #fff; opacity: .85; font: 37px/64px "Roboto Condensed", "Open Sans Condensed", Roboto, sans-serif; text-shadow: 0 0 3px #888; }
.watermark svg { filter: drop-shadow(0 0 2px #999); }

/* Taskbar */
.taskbar { display: flex; align-items: stretch; height: 40px; background: linear-gradient(90deg, #001a22, #00141f 50%, #000a1c); color: #fff; }
.start { width: 48px; }
.search { display: flex; align-items: center; width: 288px; padding-left: 12px; gap: 11px; background: #f0f0f0; border: 1px solid #aaa; border-left: 0; color: #222; }
.search input { flex: 1; min-width: 0; font-size: 14px; }
.search input::placeholder { color: #444; opacity: 1; }
.sun { margin-right: 12px; }
.app { width: 49px; }
.app.view { width: 50px; }
.app.running { width: 40px; margin: 0 5px; border-bottom: 2px solid #76b9ed; padding-top: 2px; }
.app.active { width: 46px; margin: 0 2px 0 0; background: #33464f; }
.app.busy { width: 40px; margin-left: 4px; padding-top: 2px; background: linear-gradient(90deg, #31693a 6px, #20333b 6px); border-bottom: 3px solid #4fe03f; }
.tray { display: flex; }
.tray button { width: 24px; }
.clock { display: flex; flex-direction: column; justify-content: center; width: 64px; text-align: center; font-size: 11px; line-height: 18px; }
.notify { width: 40px; margin-right: 13px; }
```
